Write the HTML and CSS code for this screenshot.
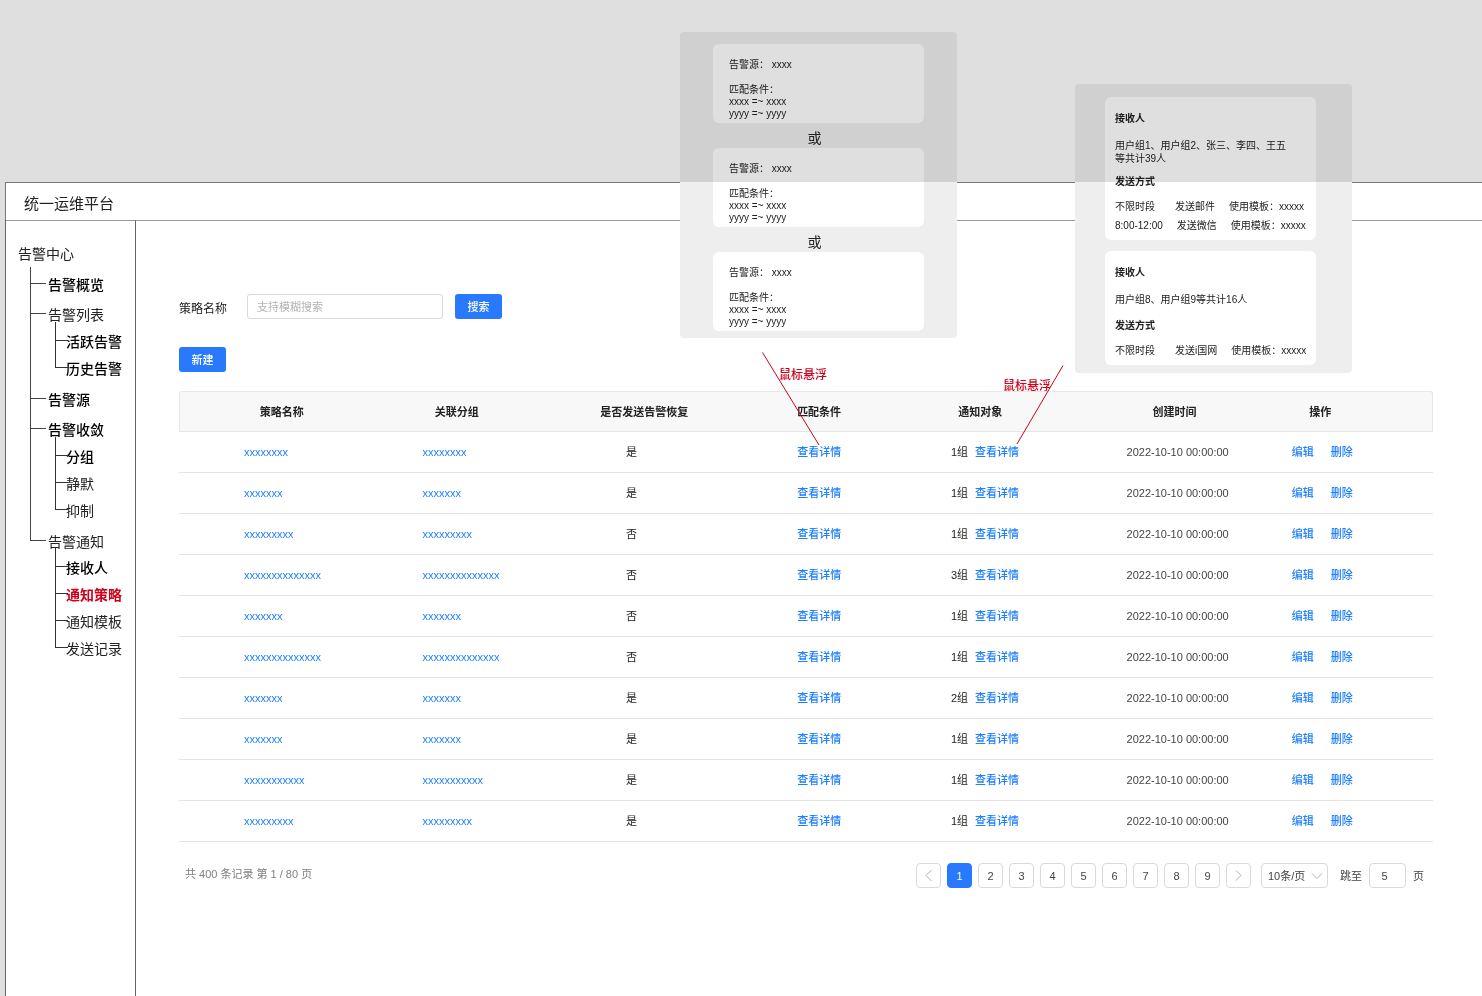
FILE: index.html
```html
<!DOCTYPE html>
<html lang="zh-CN">
<head>
<meta charset="utf-8">
<title>统一运维平台</title>
<link rel="stylesheet" href="styles.css">
</head>
<body>
<div class="app">
  <header class="topbar">统一运维平台</header>
  <div class="body">
    <nav class="sidebar">
      <div class="tree-root">告警中心</div>
      <ul class="tree">
        <li><a href="#" class="strong">告警概览</a></li>
        <li><a href="#">告警列表</a>
          <ul class="branch">
            <li><a href="#" class="strong">活跃告警</a></li>
            <li><a href="#" class="strong">历史告警</a></li>
          </ul>
        </li>
        <li><a href="#" class="strong">告警源</a></li>
        <li><a href="#" class="strong">告警收敛</a>
          <ul class="branch">
            <li><a href="#" class="strong">分组</a></li>
            <li><a href="#">静默</a></li>
            <li><a href="#">抑制</a></li>
          </ul>
        </li>
        <li><a href="#">告警通知</a>
          <ul class="branch">
            <li><a href="#" class="strong">接收人</a></li>
            <li><a href="#" class="active">通知策略</a></li>
            <li><a href="#">通知模板</a></li>
            <li><a href="#">发送记录</a></li>
          </ul>
        </li>
      </ul>
    </nav>
    <main class="main">
      <form class="search">
        <label for="policy-name">策略名称</label>
        <input id="policy-name" type="text" placeholder="支持模糊搜索">
        <button class="primary" type="button">搜索</button>
      </form>
      <button class="primary create" type="button">新建</button>
      <table class="policies">
        <thead>
          <tr><th class="c-name">策略名称</th><th class="c-group">关联分组</th><th class="c-recover">是否发送告警恢复</th><th class="c-match">匹配条件</th><th class="c-target">通知对象</th><th class="c-time">创建时间</th><th class="c-ops">操作</th></tr>
        </thead>
        <tbody>
          <tr><td class="c-name"><a href="#">xxxxxxxx</a></td><td class="c-group"><a href="#">xxxxxxxx</a></td><td class="c-recover">是</td><td class="c-match"><a href="#">查看详情</a></td><td class="c-target"><span>1组</span><a href="#">查看详情</a></td><td class="c-time">2022-10-10 00:00:00</td><td class="c-ops"><a href="#">编辑</a><a href="#">删除</a></td></tr>
          <tr><td class="c-name"><a href="#">xxxxxxx</a></td><td class="c-group"><a href="#">xxxxxxx</a></td><td class="c-recover">是</td><td class="c-match"><a href="#">查看详情</a></td><td class="c-target"><span>1组</span><a href="#">查看详情</a></td><td class="c-time">2022-10-10 00:00:00</td><td class="c-ops"><a href="#">编辑</a><a href="#">删除</a></td></tr>
          <tr><td class="c-name"><a href="#">xxxxxxxxx</a></td><td class="c-group"><a href="#">xxxxxxxxx</a></td><td class="c-recover">否</td><td class="c-match"><a href="#">查看详情</a></td><td class="c-target"><span>1组</span><a href="#">查看详情</a></td><td class="c-time">2022-10-10 00:00:00</td><td class="c-ops"><a href="#">编辑</a><a href="#">删除</a></td></tr>
          <tr><td class="c-name"><a href="#">xxxxxxxxxxxxxx</a></td><td class="c-group"><a href="#">xxxxxxxxxxxxxx</a></td><td class="c-recover">否</td><td class="c-match"><a href="#">查看详情</a></td><td class="c-target"><span>3组</span><a href="#">查看详情</a></td><td class="c-time">2022-10-10 00:00:00</td><td class="c-ops"><a href="#">编辑</a><a href="#">删除</a></td></tr>
          <tr><td class="c-name"><a href="#">xxxxxxx</a></td><td class="c-group"><a href="#">xxxxxxx</a></td><td class="c-recover">否</td><td class="c-match"><a href="#">查看详情</a></td><td class="c-target"><span>1组</span><a href="#">查看详情</a></td><td class="c-time">2022-10-10 00:00:00</td><td class="c-ops"><a href="#">编辑</a><a href="#">删除</a></td></tr>
          <tr><td class="c-name"><a href="#">xxxxxxxxxxxxxx</a></td><td class="c-group"><a href="#">xxxxxxxxxxxxxx</a></td><td class="c-recover">否</td><td class="c-match"><a href="#">查看详情</a></td><td class="c-target"><span>1组</span><a href="#">查看详情</a></td><td class="c-time">2022-10-10 00:00:00</td><td class="c-ops"><a href="#">编辑</a><a href="#">删除</a></td></tr>
          <tr><td class="c-name"><a href="#">xxxxxxx</a></td><td class="c-group"><a href="#">xxxxxxx</a></td><td class="c-recover">是</td><td class="c-match"><a href="#">查看详情</a></td><td class="c-target"><span>2组</span><a href="#">查看详情</a></td><td class="c-time">2022-10-10 00:00:00</td><td class="c-ops"><a href="#">编辑</a><a href="#">删除</a></td></tr>
          <tr><td class="c-name"><a href="#">xxxxxxx</a></td><td class="c-group"><a href="#">xxxxxxx</a></td><td class="c-recover">是</td><td class="c-match"><a href="#">查看详情</a></td><td class="c-target"><span>1组</span><a href="#">查看详情</a></td><td class="c-time">2022-10-10 00:00:00</td><td class="c-ops"><a href="#">编辑</a><a href="#">删除</a></td></tr>
          <tr><td class="c-name"><a href="#">xxxxxxxxxxx</a></td><td class="c-group"><a href="#">xxxxxxxxxxx</a></td><td class="c-recover">是</td><td class="c-match"><a href="#">查看详情</a></td><td class="c-target"><span>1组</span><a href="#">查看详情</a></td><td class="c-time">2022-10-10 00:00:00</td><td class="c-ops"><a href="#">编辑</a><a href="#">删除</a></td></tr>
          <tr><td class="c-name"><a href="#">xxxxxxxxx</a></td><td class="c-group"><a href="#">xxxxxxxxx</a></td><td class="c-recover">是</td><td class="c-match"><a href="#">查看详情</a></td><td class="c-target"><span>1组</span><a href="#">查看详情</a></td><td class="c-time">2022-10-10 00:00:00</td><td class="c-ops"><a href="#">编辑</a><a href="#">删除</a></td></tr>
        </tbody>
      </table>
      <footer class="table-foot">
        <p class="total">共 400 条记录 第 1 / 80 页</p>
        <div class="pager">
          <button type="button" aria-label="上一页"><svg width="9" height="13" viewBox="0 0 9 13"><path d="M7.5 1 2 6.500 7.500 12"/></svg></button>
          <button type="button" class="current">1</button>
          <button type="button">2</button>
          <button type="button">3</button>
          <button type="button">4</button>
          <button type="button">5</button>
          <button type="button">6</button>
          <button type="button">7</button>
          <button type="button">8</button>
          <button type="button">9</button>
          <button type="button" aria-label="下一页"><svg width="9" height="13" viewBox="0 0 9 13"><path d="M2 1.500 7 6.500 2 11.500"/></svg></button>
        </div>
        <div class="page-size">
          <select aria-label="每页条数"><option>10条/页</option></select>
          <svg width="12" height="8" viewBox="0 0 12 8"><path d="M1 1.500 6 6.500 11 1.500"/></svg>
        </div>
        <div class="jump">
          <label for="jump-page">跳至</label>
          <input id="jump-page" type="text" value="5">
          <span>页</span>
        </div>
      </footer>
    </main>
  </div>
</div>

<aside class="popover match-pop">
  <section class="card">
    <p>告警源： xxxx</p>
    <p>匹配条件：<br>xxxx =~ xxxx<br>yyyy =~ yyyy</p>
  </section>
  <div class="or">或</div>
  <section class="card">
    <p>告警源： xxxx</p>
    <p>匹配条件：<br>xxxx =~ xxxx<br>yyyy =~ yyyy</p>
  </section>
  <div class="or">或</div>
  <section class="card">
    <p>告警源： xxxx</p>
    <p>匹配条件：<br>xxxx =~ xxxx<br>yyyy =~ yyyy</p>
  </section>
</aside>

<aside class="popover target-pop">
  <section class="card">
    <h3>接收人</h3>
    <p>用户组1、用户组2、张三、李四、王五<br>等共计39人</p>
    <h3>发送方式</h3>
    <div class="way"><span>不限时段</span><span>发送邮件</span><span>使用模板：xxxxx</span></div>
    <div class="way wide"><span>8:00-12:00</span><span>发送微信</span><span>使用模板：xxxxx</span></div>
  </section>
  <section class="card">
    <h3>接收人</h3>
    <p>用户组8、用户组9等共计16人</p>
    <h3>发送方式</h3>
    <div class="way"><span>不限时段</span><span>发送i国网</span><span>使用模板：xxxxx</span></div>
  </section>
</aside>

<div class="backdrop"></div>

<div class="note note-match">鼠标悬浮</div>
<div class="note note-target">鼠标悬浮</div>
<svg class="pointer pointer-match" width="58" height="94" viewBox="0 0 58 94"><path d="M.5.5 57 93"/></svg>
<svg class="pointer pointer-target" width="48" height="80" viewBox="0 0 48 80"><path d="M47 .5 1 79"/></svg>
</body>
</html>
```
FILE: styles.css
```css
* { box-sizing: border-box; }

body {
  margin: 0;
  position: relative;
  background: #fff;
  color: #222;
  font: 11px/16px "Liberation Sans", "Noto Sans CJK SC", sans-serif;
}

button, input, select { font: inherit; color: inherit; }
a { color: #1e80ff; text-decoration: none; }
p, h3, ul { margin: 0; padding: 0; }
ul { list-style: none; }

/* Frame */
.app {
  display: flex;
  flex-direction: column;
  min-height: 100vh;
  padding-top: 182px;
  border-left: 5px solid #dfdfdf;
}
.topbar {
  height: 38px;
  padding: 0 18px;
  border: solid #777;
  border-width: 1px 0 0 1px;
  font-size: 15px;
  line-height: 41px;
}
.body {
  display: flex;
  flex: 1;
  border-left: 1px solid #666;
}

/* Navigation tree */
.sidebar {
  flex: none;
  width: 130px;
  border-right: 1px solid #666;
  border-top: 1px solid #999;
  padding-top: 22px;
  font-size: 14px;
}
.sidebar a { color: #222; }
.sidebar .strong { color: #000; font-weight: 500; }
.sidebar .active { color: #d0021b; font-weight: 700; }
.tree-root { padding-left: 12px; line-height: 22px; }
.tree { position: relative; padding-top: 5px; line-height: 30px; }
.tree > li { position: relative; padding-left: 42px; }
.tree > li::before {
  content: "";
  position: absolute;
  top: 13px;
  left: 25px;
  width: 15px;
  border-top: 1px solid #444;
}
.tree > li::after {
  content: "";
  position: absolute;
  top: 0;
  bottom: 0;
  left: 24px;
  border-left: 1px solid #444;
}
.tree > li:first-child::after { top: -3px; }
.tree > li:last-child::after { bottom: auto; height: 14px; }
.branch { margin-top: -1px; padding-bottom: 2px; line-height: 27px; }
.branch li { position: relative; padding-left: 18px; }
.branch li::before {
  content: "";
  position: absolute;
  top: -15px;
  left: 7px;
  width: 12px;
  height: 26px;
  border: solid #333;
  border-width: 0 0 1px 1px;
}
.branch li:first-child::before { top: -7px; height: 18px; }
.tree > li:last-child .branch { margin-top: -2px; }

/* Content */
.main {
  flex: 1;
  min-width: 0;
  border-top: 1px solid #999;
  padding: 73px 49px 40px 43px;
}
.search { display: flex; align-items: center; height: 25px; font-size: 12px; }
.search label { width: 68px; padding-top: 5px; }
.search input {
  width: 196px;
  height: 25px;
  margin-right: 12px;
  padding: 0 9px;
  border: 1px solid #d9d9d9;
  border-radius: 3px;
  font-size: 11px;
}
.search input::placeholder { color: #b5b5b5; }
.primary {
  width: 47px;
  height: 25px;
  padding: 0;
  border: 0;
  border-radius: 3px;
  background: #2979ff;
  color: #fff;
  font-size: 11px;
  font-weight: 500;
}
.create { display: block; margin: 28px 0 19px; }

.policies {
  width: 100%;
  table-layout: fixed;
  border-collapse: separate;
  border-spacing: 0;
}
.policies th, .policies td {
  height: 41px;
  padding: 0;
  border-bottom: 1px solid #e5e5e5;
  text-align: left;
  white-space: nowrap;
}
.policies th {
  border-top: 1px solid #e8e8e8;
  background: #f8f8f8;
  text-align: center;
  font-weight: 700;
}
.policies th:first-child { border-left: 1px solid #e8e8e8; border-top-left-radius: 3px; }
.policies th:last-child { border-right: 1px solid #e8e8e8; border-top-right-radius: 3px; padding-right: 60px; }
.policies td a { font-weight: 500; }
th.c-name { width: 16.3%; }
th.c-group { width: 11.7%; }
th.c-recover { width: 18.2%; }
th.c-match { width: 9.7%; }
th.c-target { width: 16%; }
th.c-time { width: 15%; }
td.c-name { padding-left: 65px; }
td.c-group { padding-left: 39px; }
td.c-recover { padding-left: 96px; }
td.c-match { padding-left: 39px; }
td.c-target { padding-left: 71px; }
td.c-target span { margin-right: 7px; }
td.c-time { padding-left: 46px; color: #444; }
td.c-ops { padding-left: 23px; }
td.c-ops a { margin-right: 17px; }

/* Pagination */
.table-foot {
  display: flex;
  align-items: center;
  margin-top: 21px;
  padding: 0 9px 0 6px;
  color: #444;
}
.total { margin-right: auto; padding-bottom: 4px; color: #808080; }
.pager { display: flex; gap: 6px; }
.pager button {
  display: flex;
  align-items: center;
  justify-content: center;
  width: 25px;
  height: 25px;
  padding: 0;
  border: 1px solid #d9d9d9;
  border-radius: 4px;
  background: #fff;
}
.pager .current { border-color: #2979ff; background: #2979ff; color: #fff; }
svg { fill: none; stroke: #b0b0b0; }
.page-size { position: relative; margin: 0 12px 0 10px; }
.page-size select {
  display: block;
  width: 67px;
  height: 25px;
  padding: 0 6px;
  border: 1px solid #d9d9d9;
  border-radius: 4px;
  background: #fff;
  appearance: none;
}
.page-size svg { position: absolute; top: 9px; right: 5px; pointer-events: none; }
.jump { display: flex; align-items: center; gap: 7px; }
.jump input {
  width: 37px;
  height: 25px;
  padding: 0 6px 0 0;
  border: 1px solid #d9d9d9;
  border-radius: 4px;
  text-align: center;
}

/* Hover popovers */
.popover {
  position: absolute;
  width: 277px;
  border-radius: 4px;
  background: #eee;
  font-size: 10px;
}
.card { width: 211px; border-radius: 6px; background: #fff; }
.match-pop { top: 32px; left: 680px; padding: 12px 33px 7px; line-height: 12px; }
.match-pop .card { padding: 15px 16px 3px; }
.match-pop p + p { margin-top: 13px; }
.or {
  height: 25px;
  padding: 5px 8px 0 0;
  font-size: 14px;
  line-height: 20px;
  text-align: center;
}
.target-pop { top: 84px; left: 1075px; padding: 13px 30px 8px; line-height: 13px; }
.target-pop .card { padding: 15px 10px 8px; }
.target-pop .card + .card { margin-top: 11px; }
.target-pop h3 { font-size: 10px; font-weight: 700; }
.target-pop p { margin: 14px 0 10px; }
.target-pop .card + .card p { margin-bottom: 13px; }
.way { display: flex; gap: 14px; margin-top: 12px; white-space: nowrap; }
.way span:first-child { min-width: 46px; }
.way.wide { margin-top: 6px; }

/* Grey canvas tint above the frame, darkening the popovers it overlaps */
.backdrop {
  position: absolute;
  inset: 0 0 auto 5px;
  height: 182px;
  background: #dfdfdf;
  mix-blend-mode: multiply;
  pointer-events: none;
}

/* Annotations */
.note { position: absolute; color: #d0021b; font-size: 12px; font-weight: 500; }
.note-match { top: 367px; left: 779px; }
.note-target { top: 378px; left: 1003px; }
.pointer { position: absolute; stroke: #d0021b; pointer-events: none; }
.pointer-match { top: 352px; left: 762px; }
.pointer-target { top: 365px; left: 1016px; }
```
